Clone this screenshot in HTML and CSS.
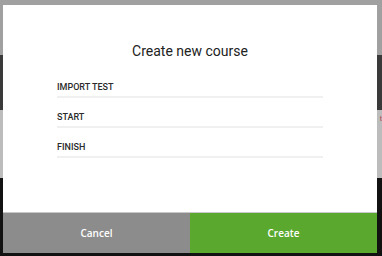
FILE: index.html
```html
<!DOCTYPE html>
<html>
<head>
<meta charset="utf-8">
<link rel="stylesheet" href="styles.css">
</head>
<body>
<div class="page">
  <div class="band band-top"></div>
  <div class="band band-dark"></div>
  <div class="band band-light"><span class="red-text">t</span></div>
  <div class="band band-black"></div>
</div>
<div class="modal">
  <h1 class="title">Create new course</h1>
  <div class="fields">
    <div class="field">IMPORT TEST</div>
    <div class="field">START</div>
    <div class="field">FINISH</div>
  </div>
  <div class="actions">
    <button class="btn btn-cancel">Cancel</button>
    <button class="btn btn-create">Create</button>
  </div>
</div>
</body>
</html>
```
FILE: styles.css
```css
html, body {
  margin: 0;
  padding: 0;
  width: 382px;
  height: 256px;
  overflow: hidden;
  background: #111;
}
.page {
  display: flex;
  flex-direction: column;
  height: 256px;
}
.band-top { height: 55px; background: #a0a0a0; }
.band-dark { height: 55px; background: #3a3a3a; }
.band-light { height: 68px; background: #bcbcbc; position: relative; }
.band-black { flex: 1; background: #121212; }
.red-text {
  position: absolute;
  right: 0;
  top: 4px;
  color: #b04a4a;
  font: 8px "Liberation Sans", sans-serif;
}
.modal {
  position: absolute;
  left: 3px;
  top: 5px;
  width: 374px;
  height: 248px;
  background: #fff;
  display: flex;
  flex-direction: column;
}
.title {
  margin: 35px 0 0;
  font: 400 14px/22px "Roboto", "Liberation Sans", sans-serif;
  color: #222;
  text-align: center;
}
.fields {
  margin: 6px 0 0 54px;
  width: 266px;
  display: flex;
  flex-direction: column;
}
.field {
  height: 30px;
  border-bottom: 2px solid #f0f0f0;
  box-sizing: border-box;
  padding-top: 13px;
  font: 500 9px/12px "Roboto", "Liberation Sans", sans-serif;
  color: #2a2a2a;
}
.actions {
  margin-top: auto;
  display: flex;
  height: 40px;
  border-top: 1px solid #c8c8c8;
}
.btn {
  flex: 1;
  border: none;
  margin: 0;
  color: #fff;
  font: 600 10px "Open Sans", sans-serif;
  cursor: pointer;
}
.btn-cancel { background: #8c8c8c; }
.btn-create { background: #5aa92e; }
```
